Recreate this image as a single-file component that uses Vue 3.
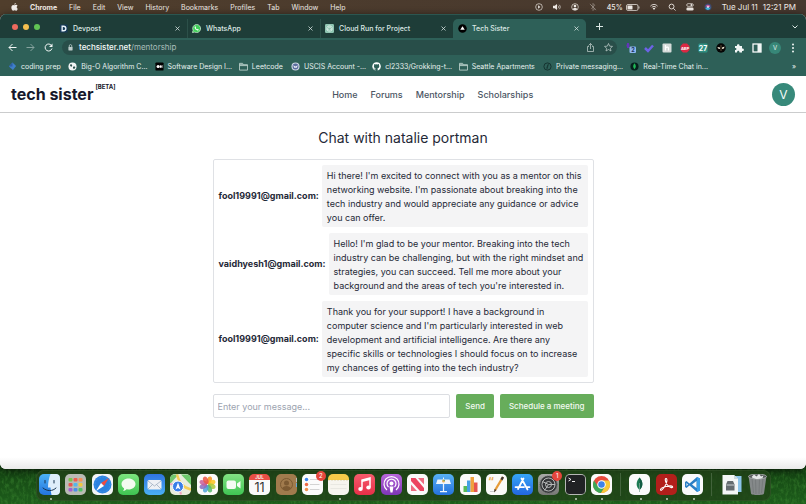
<script setup>
import { ref } from 'vue'

const menus = ['File', 'Edit', 'View', 'History', 'Bookmarks', 'Profiles', 'Tab', 'Window', 'Help']

const tabs = [
  { title: 'Devpost', icon: 'devpost' },
  { title: 'WhatsApp', icon: 'whatsapp' },
  { title: 'Cloud Run for Project', icon: 'cloud' },
  { title: 'Tech Sister', icon: 'sister', active: true }
]

const bookmarks = [
  { title: 'coding prep', art: '<path d="M10 1 18 9 11 18 2 10Z" fill="#3f7fca"/><path d="M10 1v9H2Z" fill="#2c5fa8"/>' },
  { title: 'Big-O Algorithm C...', art: '<circle cx="10" cy="10" r="9" fill="#f2f5f4"/><path d="M4 6c4-3 6 0 5 3s-4 1-5-3ZM11 11c3-2 6-1 5 2s-5 4-5-2Z" fill="#2c4f4b"/>' },
  { title: 'Software Design I...', art: '<rect x="1" y="1" width="18" height="18" rx="2" fill="#000"/><circle cx="7" cy="10" r="3.6" fill="#fff"/><ellipse cx="13" cy="10" rx="2" ry="3.4" fill="#fff"/><path d="M16.5 7v6" stroke="#fff"/>' },
  { title: 'Leetcode', folder: true },
  { title: 'USCIS Account -...', art: '<circle cx="10" cy="10" r="9" fill="#c9d2e2"/><circle cx="10" cy="10" r="6.4" fill="#596c9e"/><path d="m5 7 5 3 5-3-2 6h-6Z" fill="#e8ebf4"/>' },
  { title: 'cl2333/Grokking-t...', art: '<path fill="#fff" d="M10 .8a9.3 9.3 0 0 0-3 18.1c.5.1.7-.2.7-.5v-1.9c-2.600.6-3.100-1.100-3.100-1.100-.4-1.100-1-1.400-1-1.400-.9-.6 0-.6 0-.6 1 .1 1.500 1 1.500 1 .8 1.500 2.200 1.100 2.700.8.1-.6.300-1 .6-1.200-2.100-.2-4.200-1-4.200-4.600 0-1 .4-1.900 1-2.500-.1-.3-.5-1.200.1-2.500 0 0 .8-.3 2.600 1a8.600 8.600 0 0 1 4.600 0c1.800-1.300 2.600-1 2.600-1 .5 1.300.2 2.200.1 2.500.6.6 1 1.500 1 2.500 0 3.600-2.200 4.400-4.200 4.600.3.3.6.9.6 1.700v2.700c0 .3.2.6.7.5A9.300 9.300 0 0 0 10 .8Z"/>' },
  { title: 'Seattle Apartments', folder: true },
  { title: 'Private messaging...', art: '<circle cx="10" cy="10" r="8" fill="none" stroke="#14302d" stroke-width="2"/><path d="M12 4 9 16M8 14l3-8" stroke="#14302d" stroke-width="1.500"/>' },
  { title: 'Real-Time Chat in...', art: '<circle cx="10" cy="10" r="9" fill="#06201d"/><path d="M10 3c4 5 4 9 0 13-4-4-4-8 0-13Z" fill="#1fb656"/>' }
]

const links = ['Home', 'Forums', 'Mentorship', 'Scholarships']

const messages = [
  {
    from: 'fool19991@gmail.com',
    text: "Hi there! I'm excited to connect with you as a mentor on this networking website. I'm passionate about breaking into the tech industry and would appreciate any guidance or advice you can offer."
  },
  {
    from: 'vaidhyesh1@gmail.com',
    text: "Hello! I'm glad to be your mentor. Breaking into the tech industry can be challenging, but with the right mindset and strategies, you can succeed. Tell me more about your background and the areas of tech you're interested in."
  },
  {
    from: 'fool19991@gmail.com',
    text: "Thank you for your support! I have a background in computer science and I'm particularly interested in web development and artificial intelligence. Are there any specific skills or technologies I should focus on to increase my chances of getting into the tech industry?"
  }
]

const petals = ['#f7941d', '#f9c31f', '#a8c93a', '#55b96a', '#4fa3d9', '#8a6cc0', '#c95f9b', '#ec5548']
  .map((c, i) => `<ellipse cx="21" cy="12" rx="5" ry="8" fill="${c}" opacity=".85" transform="rotate(${i * 45 + 22} 21 21)"/>`)
  .join('')

const pads = ['#7bc24c', '#ef5c50', '#f4925a', '#e8554e', '#57b6e9', '#f2c83e', '#a25fd2', '#4c8fe6', '#51c264']
  .map((c, i) => `<rect x="${7 + (i % 3) * 10}" y="${8 + Math.floor(i / 3) * 10}" width="8" height="7" rx="2" fill="${c}"/>`)
  .join('')

const dock = [
  { name: 'Finder', running: true, bg: 'linear-gradient(#4cb2f8, #2474dd)', art: '<path d="M23 0h11a8 8 0 0 1 8 8v26a8 8 0 0 1-8 8h-9c-1-5-2-10-2-15h-5C18 17 20 8 23 0Z" fill="#dfeefb"/><path d="M12 13v5M30 13v5M8 28c8 7 19 7 26 0" fill="none" stroke="#16324f" stroke-width="2" stroke-linecap="round"/>' },
  { name: 'Launchpad', bg: '#b9bbb4', art: pads },
  { name: 'Safari', bg: '#f2f4f6', art: '<circle cx="21" cy="21" r="18" fill="#2b82e0"/><circle cx="21" cy="21" r="15" fill="none" stroke="#7fbcf5" stroke-dasharray="1 2"/><path d="m34 8-10 16-6-6Z" fill="#f04c41"/><path d="m8 34 10-16 6 6Z" fill="#fff"/>' },
  { name: 'Messages', bg: 'linear-gradient(#7ce57e, #3ec351)', art: '<path d="M21 9c8 0 14 5 14 11s-6 11-14 11l-4-.5c-2 2-4 3-7 3 2-2 2-3 2-5-3-2-5-5-5-8.500C7 14 13 9 21 9Z" fill="#f3fbf1"/>' },
  { name: 'Mail', bg: 'linear-gradient(#2f74e0, #4bb0f4)', art: '<rect x="7" y="12" width="28" height="19" rx="3" fill="#eef1f5"/><path d="m8 14 13 10 13-10M8 30l9-9M34 30l-9-9" fill="none" stroke="#98a9bc" stroke-width="1.500"/>' },
  { name: 'Maps', bg: '#e8ecdc', art: '<path d="M0 10a9 9 0 0 1 9-9h8L0 20Z" fill="#72c86e"/><path d="M22 1h11a9 9 0 0 1 9 9v12Z" fill="#6cc96b"/><path d="M14 1c5 18 12 26 28 30" fill="none" stroke="#f6cd55" stroke-width="5"/><path d="M0 20c9 0 20 8 22 21" fill="none" stroke="#eda5bd" stroke-width="4"/><circle cx="16" cy="25" r="11" fill="#3a7ee8" stroke="#fff" stroke-width="2"/><path d="m16 17 5 14-5-3-5 3Z" fill="#fff"/>' },
  { name: 'Photos', bg: '#fbfbf9', art: petals },
  { name: 'FaceTime', bg: 'linear-gradient(#83e383, #3fc453)', art: '<rect x="7" y="13" width="19" height="17" rx="4" fill="#f5fbf4"/><path d="m28 19 7-5v15l-7-5Z" fill="#f5fbf4"/>' },
  { name: 'Calendar', bg: 'linear-gradient(#e94f45 30%, #fafafa 30%)', art: '<text x="21" y="10" text-anchor="middle" font-size="9" font-weight="600" fill="#fff">JUL</text><text x="21" y="35" text-anchor="middle" font-size="25" fill="#333">11</text>' },
  { name: 'Contacts', bg: '#a17b4d', art: '<circle cx="21" cy="21" r="12" fill="none" stroke="#7c5a32" stroke-width="2"/><circle cx="21" cy="18" r="5" fill="#7c5a32"/><path d="M12 29c2-7 16-7 18 0-5 5-13 5-18 0Z" fill="#7c5a32"/><path d="M41 8v8" stroke="#b9b9b9" stroke-width="2"/><path d="M41 18v8" stroke="#65a8d8" stroke-width="2"/>' },
  { name: 'Reminders', badge: '2', bg: '#fbfbfb', art: '<circle cx="9" cy="11" r="3.500" fill="#3c86ee"/><circle cx="9" cy="21" r="3.500" fill="#ee6b47"/><circle cx="9" cy="31" r="3.500" fill="#f0914d"/><path d="M16 11h19M16 21h19M16 31h19" stroke="#c5c5c5" stroke-width="1.500"/>' },
  { name: 'Notes', running: true, bg: 'linear-gradient(#f6ca49 28%, #f7f5ef 28%)', art: '<path d="M0 12.500h42" stroke="#b69d55" stroke-dasharray="1 2"/><path d="M5 21h32M5 29h32" stroke="#dbdad4"/>' },
  { name: 'Music', bg: 'linear-gradient(#f65b6c, #e72f48)', art: '<path d="M16 29V12l16-4v18" fill="none" stroke="#fff" stroke-width="3"/><path d="M16 14 32 10" stroke="#fff" stroke-width="4"/><ellipse cx="13" cy="30" rx="4.500" ry="4" fill="#fff"/><ellipse cx="29" cy="27" rx="4.500" ry="4" fill="#fff"/>' },
  { name: 'Podcasts', bg: 'linear-gradient(#b867db, #7d36b5)', art: '<path d="M12 32a15 15 0 1 1 18 0M15 26a9 9 0 1 1 12 0" fill="none" stroke="#fff" stroke-width="2.500"/><circle cx="21" cy="19" r="4" fill="#fff"/><path d="M17 25h8l-2 12h-4Z" fill="#fff"/>' },
  { name: 'News', bg: '#fafafa', art: '<path d="M8 8h9l17 20v6h-8L8 14Z" fill="#ec4460"/><path d="M22 8h12v13ZM8 21v13h12Z" fill="#ef6b80"/>' },
  { name: 'Keynote', bg: 'linear-gradient(#58b1f4, #2572dd)', art: '<path d="M9 11h24l3 9H6Z" fill="#eef6fc"/><path d="M21 20v14M14 35h14" stroke="#eef6fc" stroke-width="2.500"/><path d="M21 7v5" stroke="#eef6fc" stroke-width="2"/><circle cx="21" cy="14" r="3" fill="#e7b056"/><path d="M21 14v-3a3 3 0 0 1 3 3Z" fill="#57a95b"/>' },
  { name: 'Numbers', bg: '#fbfbfa', art: '<path d="M7 36V24h7v12Z" fill="#57bb59"/><path d="M14 36V13h7v23Z" fill="#45a1e4"/><path d="M21 36V6h7v30Z" fill="#f0a23d"/><path d="M28 36V17h7v19Z" fill="#e55450"/>' },
  { name: 'Pages', bg: '#fafaf7', art: '<text x="4" y="22" font-size="22" font-weight="700" fill="#edaa53">“</text><path d="m32 5 4 2-15 25-4 4 0-6Z" fill="#e79c37"/><path d="m32 5 4 2-3 6-4-3Z" fill="#3b3531"/><path d="m17 30 4 2-5 5Z" fill="#3b3531"/><path d="M8 35h8" stroke="#bbb" stroke-width="1.500"/>' },
  { name: 'App Store', bg: 'linear-gradient(#36a5f6, #2366df)', art: '<path d="M23 9 12 30M19 9l12 22M7 26h17M29 26h6" fill="none" stroke="#fff" stroke-width="3.500" stroke-linecap="round"/>' },
  { name: 'System Settings', badge: '1', bg: 'linear-gradient(#a9aaa8, #777875)', art: '<circle cx="21" cy="21" r="17" fill="#353739"/><circle cx="21" cy="21" r="13" fill="none" stroke="#b8baba" stroke-width="2"/><circle cx="21" cy="21" r="6" fill="none" stroke="#b8baba" stroke-width="2"/><path d="M21 21 9 15M21 21h13M21 21l-8 12" stroke="#b8baba" stroke-width="2"/><circle cx="21" cy="21" r="17" fill="none" stroke="#55585a" stroke-width="2" stroke-dasharray="2 2"/>' },
  { name: 'Terminal', running: true, bg: '#b5b7b5', art: '<rect x="2" y="2" width="38" height="38" rx="7" fill="#202224"/><path d="m7 8 5 3-5 3M14 15h6" fill="none" stroke="#f1f1f1" stroke-width="2"/>' },
  { name: 'Chrome', running: true, bg: '#fafafa', art: '<circle cx="21" cy="21" r="17" fill="#e94b3d"/><path d="M6 13A17 17 0 0 0 20 38l8-13-14 0Z" fill="#3da857"/><path d="M20 38A17 17 0 0 0 36 13H21l7 12Z" fill="#f7c938"/><circle cx="21" cy="21" r="8.500" fill="#fff"/><circle cx="21" cy="21" r="6.500" fill="#3e82ea"/>' },
  { divider: true, name: 'apps' },
  { name: 'MongoDB Compass', running: true, bg: '#fbfbfb', art: '<path d="M21 7c8 9 7 18 1 24h-2c-6-6-7-15 1-24Z" fill="#1d7b53"/><path d="M21 7c8 9 7 18 1 24Z" fill="#135c44"/><path d="M21 18v18" stroke="#7fa897" stroke-width="1.500"/>' },
  { name: 'Acrobat', running: true, bg: '#b21f1b', art: '<path d="M20 9c4 0 1 12-4 18-4 6-7 7-7 4 1-5 21-9 24-6 2 3-5 4-10-3-4-5-6-13-3-13Z" fill="none" stroke="#fff" stroke-width="2.200"/>' },
  { name: 'Visual Studio Code', running: true, bg: '#f9fafb', art: '<path d="m30 6 6 3v24l-6 3-15-13-6 5-3-2v-10l3-2 6 5Z" fill="#2b7fc5"/><path d="M29 14v14l-9-7ZM9 18v6l3-3Z" fill="#f9fafb"/><path d="m30 6 6 3v24l-6 3Z" fill="#3aa0e8"/>' },
  { divider: true, name: 'files' },
  { name: 'Downloads', bg: 'transparent', art: '<path d="M18 4h23v32H18Z" fill="#8cc4ea"/><path d="M3 2h23l8 8v31H3Z" fill="#f4f6f7"/><path d="M26 2v8h8Z" fill="#cdd8de"/><path d="m10 21 3-7h11l3 7v12H10Z" fill="#646b70"/><path d="M11 22h15" stroke="#c8ced1" stroke-width="2"/>' },
  { name: 'Trash', bg: 'transparent', art: '<path d="m3 4 5 35c0 4 26 4 26 0l5-35Z" fill="#85898a"/><path d="m10 8 3 30M17 9l1 31M25 9l-1 31M32 8l-3 30" stroke="#717677" stroke-width="1.500"/><ellipse cx="21" cy="5" rx="18" ry="5" fill="#55595a" stroke="#b4b8b8" stroke-width="1.500"/><path d="m9 6 5-5 5 4 5-5 4 5 5-2-2 5c-6 3-16 3-22-2Z" fill="#e6e8e8"/>' }
]

const draft = ref('')
const address = ref('techsister.net/mentorship')

function send() {
  draft.value = ''
}
</script>

<template>
  <div class="desktop">
    <svg class="grass" aria-hidden="true">
      <filter id="blades" x="0" y="0" width="100%" height="100%" color-interpolation-filters="sRGB">
        <feTurbulence type="fractalNoise" baseFrequency=".35 .2" numOctaves="3" seed="4" />
        <feColorMatrix values="0 0 0 0 .3  0 0 0 0 .62  0 0 0 0 .24  1.800 0 0 0 -.75" />
      </filter>
      <rect width="100%" height="100%" filter="url(#blades)" />
    </svg>

    <header class="menubar">
      <nav class="menus" aria-label="Menu bar">
        <button class="apple" aria-label="Apple">
          <svg viewBox="0 0 16 18"><path fill="#f4f0ec" d="M11 0c.2 2-1.600 4-3.500 4C7.300 2 9 .3 11 0ZM8 5c1 0 2-.9 3.700-.9 1.300 0 2.500.7 3.300 1.800-3 1.800-2.300 5.700.5 6.900-.9 2.400-2.400 4.700-4 4.700-1.300 0-1.700-.8-3.200-.8s-2 .8-3.200.8C2.900 17.500.8 13.600.8 10c0-3.700 2.200-5.700 4.200-5.700C6.300 4.300 7.300 5 8 5Z" /></svg>
        </button>
        <button class="app-name">Chrome</button>
        <button v-for="m in menus" :key="m">{{ m }}</button>
      </nav>
      <div class="status">
        <svg viewBox="0 0 18 18"><circle cx="9" cy="9" r="7.500" class="line" /><path d="m7 5 5 4-5 4Z" class="solid" /></svg>
        <svg viewBox="0 0 18 18"><path d="M0 6h4l5-4v14l-5-4H0Z" class="solid" /><path d="M11 6c2 2 2 4 0 6M14 4c3 3 3 7 0 10" class="line" /></svg>
        <svg viewBox="0 0 18 18"><circle cx="9" cy="9" r="7.500" class="line" /><circle cx="9" cy="7" r="3" class="solid" /><path d="M3.500 14c2-4 9-4 11 0-3 3-8 3-11 0Z" class="solid" /></svg>
        <svg viewBox="0 0 18 18" class="dim"><path d="m5 5 8 8-4 4V1l4 4-8 8M2 2l14 14" class="line" /></svg>
        <span class="power">45%
          <svg viewBox="0 0 28 14" class="battery"><rect x="1" y="1" width="23" height="12" rx="3" class="line" /><rect x="3" y="3" width="10" height="8" rx="1" class="solid" /><path d="M26 5v4" class="line" /></svg>
        </span>
        <svg viewBox="0 0 18 18"><path d="M1 7c5-5 11-5 16 0M4 10c3-3 7-3 10 0" class="line thick" /><path d="m6 12 3 4 3-4c-2-1.500-4-1.500-6 0Z" class="solid" /></svg>
        <svg viewBox="0 0 18 18"><circle cx="8" cy="8" r="5.500" class="line thick" /><path d="m12 12 5 5" class="line thick" /></svg>
        <svg viewBox="0 0 18 18"><rect x="1.500" y="1.500" width="15" height="6" rx="3" class="line" /><circle cx="12" cy="4.500" r="2" class="solid" /><rect x="1" y="10" width="16" height="7" rx="3" class="solid" /></svg>
        <svg viewBox="0 0 18 18"><circle cx="9" cy="9" r="8" fill="#3c4a6d" /><path d="M3 8c5-8 12-2 11 0-2 4-7 0-11 0Z" fill="#d05aa0" /><path d="M3 11c5-4 9 3 12-2-1 8-9 9-12 2Z" fill="#42b6d8" /><circle cx="9" cy="9" r="2" fill="#f4f8fc" /></svg>
        <time class="clock"><span>Tue Jul 11</span><span>12:21 PM</span></time>
      </div>
    </header>

    <section class="window">
      <div class="tabstrip">
        <div class="lights"><i class="close" /><i class="min" /><i class="max" /></div>
        <div v-for="t in tabs" :key="t.title" class="tab" :class="{ active: t.active }">
          <svg viewBox="0 0 20 20" class="favicon">
            <template v-if="t.icon === 'devpost'">
              <rect x="2" y="1" width="17" height="18" rx="2" fill="#173a58" />
              <path d="M7 5h3c7 0 7 10 0 10H7Z" fill="none" stroke="#eaf4fb" stroke-width="3" />
            </template>
            <template v-else-if="t.icon === 'whatsapp'">
              <path d="M10 1a9 9 0 1 1-4 17l-5 1 1.500-5A9 9 0 0 1 10 1Z" fill="#3fcf58" stroke="#e4f6e7" stroke-width="1.500" />
              <path d="M6 6c1-1 2-1 2 0l1 2-1 1c1 2 2 2 3 3l1-1 3 1c0 2-2 3-4 2-3-1-6-5-5-8Z" fill="#fff" />
            </template>
            <template v-else-if="t.icon === 'cloud'">
              <rect width="20" height="20" rx="3" fill="#8fc5b2" />
              <path d="M10 3 16 6.500v7L10 17l-6-3.500v-7ZM7 5l7 4v6M13 5 6 9v6M4 11l6 3 6-4" fill="none" stroke="#d9eee6" stroke-width="1.500" />
            </template>
            <template v-else>
              <circle cx="10" cy="10" r="9.500" fill="#000" />
              <path d="m10 5 5 8H5Z" fill="#fff" />
            </template>
          </svg>
          <span class="tab-title">{{ t.title }}</span>
          <button class="tab-close" :aria-label="'Close ' + t.title">
            <svg viewBox="0 0 10 10"><path d="m1 1 8 8M9 1 1 9" class="line" /></svg>
          </button>
        </div>
        <button class="new-tab" aria-label="New tab">
          <svg viewBox="0 0 14 14"><path d="M7 0v14M0 7h14" class="line thick" /></svg>
        </button>
        <button class="tab-search" aria-label="Search tabs">
          <svg viewBox="0 0 12 12"><path d="m1 3 5 5 5-5" class="line thick" /></svg>
        </button>
      </div>

      <div class="toolbar">
        <button aria-label="Back"><svg viewBox="0 0 18 18"><path d="M17 9H2M9 2 2 9l7 7" class="line thick" /></svg></button>
        <button aria-label="Forward" class="faded"><svg viewBox="0 0 18 18"><path d="M1 9h15M9 2l7 7-7 7" class="line thick" /></svg></button>
        <button aria-label="Reload"><svg viewBox="0 0 18 18"><path d="M15 5a7 7 0 1 0 1 6" class="line thick" /><path d="M17 1v7h-7Z" class="solid" /></svg></button>
        <div class="omnibox">
          <svg viewBox="0 0 12 16" class="lock"><path d="M3 7V4c0-4 6-4 6 0v3" class="line thick" /><rect x="1" y="7" width="10" height="8" rx="1" class="solid" /></svg>
          <label class="address">
            <span class="address-text" aria-hidden="true"><b>techsister.net</b>/mentorship</span>
            <input v-model="address" aria-label="Address" />
          </label>
          <button aria-label="Share"><svg viewBox="0 0 18 18"><path d="M6 7H3v10h12V7h-3M9 12V1M5 5l4-4 4 4" class="line" /></svg></button>
          <button aria-label="Bookmark"><svg viewBox="0 0 18 18"><path d="m9 1 2.300 5.300 5.700.5-4.300 3.800L14 16l-5-3-5 3 1.300-5.400L1 6.800l5.700-.5Z" class="line" /></svg></button>
        </div>
        <div class="extensions">
          <button aria-label="Extension 2"><svg viewBox="0 0 20 20"><path d="M4 0v10M1 5h6" stroke="#6236b8" stroke-width="4" /><rect x="7" y="7" width="13" height="13" rx="2" fill="#8fb7f2" /><text x="14" y="18" text-anchor="middle" font-size="11" font-weight="700" fill="#17335c">2</text></svg></button>
          <button aria-label="Tasks"><svg viewBox="0 0 20 20"><path d="m2 10 6 6L18 5" fill="none" stroke="#6c63e6" stroke-width="5" /></svg></button>
          <button aria-label="Honey"><svg viewBox="0 0 20 20"><rect x="1" y="1" width="18" height="18" rx="2" fill="#d5dbd9" /><path d="M7 4v11M7 10c4-4 6-1 6 1v4" fill="none" stroke="#fff" stroke-width="2.500" /></svg></button>
          <button aria-label="Adblock Plus"><svg viewBox="0 0 20 20"><path d="M6 1h8l5 5v8l-5 5H6l-5-5V6Z" fill="#dc2843" /><text x="10" y="13" text-anchor="middle" font-size="8" font-weight="700" fill="#fff">ABP</text></svg></button>
          <button aria-label="Calendar"><svg viewBox="0 0 20 20"><rect x="1" y="1" width="18" height="18" rx="2" fill="#2f9183" /><text x="10" y="15" text-anchor="middle" font-size="14" font-weight="700" fill="#fff">27</text></svg></button>
          <button aria-label="Focus"><svg viewBox="0 0 20 20"><circle cx="10" cy="10" r="9.500" fill="#050505" /><path d="m3 8 5 1v3l-4-1ZM17 7l-5 2v3l4-1Z" fill="#f0e7d2" /><path d="M10 4v12" stroke="#604d37" stroke-width="2" /></svg></button>
          <button aria-label="Extensions"><svg viewBox="0 0 20 20"><path d="M2 6h4c-1-5 6-5 5 0h5v5c5-1 5 6 0 5v3h-5c0-5-5-5-5 0H2v-5c4 0 4-4 0-4Z" class="solid" /></svg></button>
          <button aria-label="Side panel"><svg viewBox="0 0 20 20"><rect x="2" y="2" width="16" height="16" fill="none" stroke="#fff" stroke-width="2.500" /><path d="M11 2h7v16h-7Z" class="solid" /></svg></button>
          <button class="profile" aria-label="Profile">V</button>
          <button aria-label="More"><svg viewBox="0 0 20 20"><circle cx="10" cy="3" r="2" class="solid" /><circle cx="10" cy="10" r="2" class="solid" /><circle cx="10" cy="17" r="2" class="solid" /></svg></button>
        </div>
      </div>

      <nav class="bookmarks" aria-label="Bookmarks">
        <a v-for="b in bookmarks" :key="b.title" href="#">
          <svg v-if="b.folder" viewBox="0 0 20 20"><path d="M1 3h7l2 3h9v12H1ZM1 8h18M1 6h9" fill="none" stroke="#b9cfca" stroke-width="2" /></svg>
          <svg v-else viewBox="0 0 20 20" v-html="b.art" />
          <span>{{ b.title }}</span>
        </a>
        <button aria-label="More bookmarks">»</button>
      </nav>

      <main class="page">
        <header class="site-header">
          <a href="#" class="logo">tech sister<sup>[BETA]</sup></a>
          <nav class="site-nav" aria-label="Site">
            <a v-for="l in links" :key="l" href="#">{{ l }}</a>
          </nav>
          <button class="avatar" aria-label="Account">V</button>
        </header>

        <div class="chat">
          <h1>Chat with natalie portman</h1>
          <ul class="messages">
            <li v-for="(m, i) in messages" :key="i">
              <strong>{{ m.from }}:</strong>
              <p>{{ m.text }}</p>
            </li>
          </ul>
          <form class="composer" @submit.prevent="send">
            <input v-model="draft" aria-label="Message" placeholder="Enter your message..." />
            <button type="submit">Send</button>
            <button type="button">Schedule a meeting</button>
          </form>
        </div>
      </main>
    </section>

    <nav class="dock" aria-label="Dock">
      <template v-for="d in dock" :key="d.name">
        <i v-if="d.divider" class="divider" />
        <button v-else :aria-label="d.name" :class="{ running: d.running }" :style="{ background: d.bg }">
          <svg viewBox="0 0 42 42" v-html="d.art" />
          <span v-if="d.badge" class="badge">{{ d.badge }}</span>
        </button>
      </template>
    </nav>
  </div>
</template>

<style>
body {
  background: #18421a;
}
</style>

<style scoped>
* {
  box-sizing: border-box;
}

.desktop {
  position: relative;
  display: flex;
  flex-direction: column;
  min-height: 100vh;
  overflow: hidden;
  font-family: Inter, "Liberation Sans", sans-serif;
  background: linear-gradient(#4b3c2d 0, #4b3c2d 30px, #123d10 90%, #1d5d1b);
}

.grass {
  position: absolute;
  left: 0;
  bottom: 0;
  width: 100%;
  height: 40px;
  opacity: 0.5;
}

button {
  padding: 0;
  border: 0;
  background: none;
  color: inherit;
  font: inherit;
}

a {
  color: inherit;
  text-decoration: none;
}

svg {
  display: block;
  flex: none;
}

.line {
  fill: none;
  stroke: currentColor;
  stroke-width: 1.5;
}

.thick {
  stroke-width: 2;
}

.solid {
  fill: currentColor;
}

.menubar {
  display: flex;
  justify-content: space-between;
  align-items: center;
  height: 14px;
  padding: 0 10px 0 11px;
  font-size: 7px;
  font-weight: 500;
  color: #f0ebe6;
  background: linear-gradient(90deg, #503e2c, #46382f);
}

.menus,
.status {
  display: flex;
  align-items: center;
}

.menus {
  gap: 12px;
  font-weight: 400;
}

.app-name {
  font-weight: 700;
}

.apple svg {
  width: 7px;
  height: 8px;
}

.status {
  gap: 10px;
}

.status svg {
  width: 8px;
  height: 8px;
}

.status .dim {
  opacity: 0.5;
}

.power {
  display: flex;
  align-items: center;
  gap: 3px;
}

.status .battery {
  width: 14px;
  height: 7px;
}

.clock {
  display: flex;
  gap: 5px;
  font-size: 8px;
  font-weight: 400;
}

.window {
  position: relative;
  display: flex;
  flex: 1;
  flex-direction: column;
  overflow: hidden;
  border-radius: 6px;
  background: #fff;
  box-shadow: 0 2px 9px rgba(0, 0, 0, 0.7);
}

.tabstrip {
  display: flex;
  align-items: flex-end;
  height: 24px;
  padding-right: 8px;
  font-size: 7px;
  font-weight: 500;
  color: #dce8e5;
  background: #1e3d38;
  border-top: 1px solid #2c5650;
}

.lights {
  display: flex;
  gap: 5px;
  align-self: center;
  width: 54px;
  padding-left: 12px;
}

.lights i {
  width: 6px;
  height: 6px;
  border-radius: 50%;
}

.close {
  background: #ed6a5e;
}

.min {
  background: #f5bf4f;
}

.max {
  background: #61c554;
}

.tab {
  display: flex;
  flex: 0 1 133px;
  align-items: center;
  height: 19px;
  padding: 0 7px 0 5px;
}

.tab + .tab {
  box-shadow: inset 1px 0 #2c5049;
}

.tab.active {
  border-radius: 5px 5px 0 0;
  background: #2e6058;
  box-shadow: none;
}

.favicon {
  width: 9px;
  height: 9px;
}

.tab-title {
  flex: 1;
  padding-left: 5px;
  white-space: nowrap;
}

.tab-close svg {
  width: 5px;
  height: 5px;
}

.new-tab {
  align-self: center;
  padding-left: 10px;
}

.new-tab svg {
  width: 7px;
  height: 7px;
}

.tab-search {
  align-self: center;
  margin-left: auto;
}

.tab-search svg {
  width: 6px;
  height: 6px;
}

.toolbar {
  display: flex;
  align-items: center;
  gap: 9px;
  height: 19px;
  padding: 0 8px;
  color: #f1f6f5;
  background: #2e6058;
}

.toolbar svg {
  width: 9px;
  height: 9px;
}

.faded {
  opacity: 0.45;
}

.omnibox {
  display: flex;
  flex: 1;
  align-items: center;
  gap: 6px;
  height: 15px;
  padding: 0 4px 0 6px;
  border-radius: 8px;
  color: #bdccca;
  background: #284e49;
}

.omnibox button {
  padding-left: 3px;
}

.toolbar .lock {
  width: 5px;
  height: 7px;
}

.address {
  position: relative;
  flex: 1;
  font-size: 8px;
  line-height: 15px;
}

.address-text {
  color: #a9bebb;
}

.address-text b {
  font-weight: 500;
  color: #f6faf9;
}

.address input {
  position: absolute;
  inset: 0;
  width: 100%;
  padding: 0;
  border: 0;
  outline: 0;
  font: inherit;
  color: transparent;
  background: transparent;
}

.extensions {
  display: flex;
  align-items: center;
  gap: 8px;
}

.extensions svg {
  width: 10px;
  height: 10px;
}

.profile {
  width: 12px;
  height: 12px;
  margin: 0 -1px;
  border-radius: 50%;
  font-size: 6px;
  line-height: 12px;
  color: #e2f1ed;
  background: #378778;
}

.bookmarks {
  display: grid;
  grid-template-columns: 60fr 86fr 84fr 52fr 81fr 86fr 84fr 87fr 161fr auto;
  align-items: center;
  height: 19px;
  padding: 0 10px 0 8px;
  font-size: 7px;
  font-weight: 400;
  color: #e6f0ee;
  background: #2e6058;
}

.bookmarks a {
  display: flex;
  align-items: center;
  gap: 4px;
  min-width: 0;
  white-space: nowrap;
}

.bookmarks svg {
  width: 9px;
  height: 9px;
}

.page {
  flex: 1;
  color: #1f2937;
  background: linear-gradient(#fff 97%, #e9e9e9);
}

.site-header {
  display: flex;
  justify-content: space-between;
  align-items: center;
  height: 37px;
  padding: 0 11px;
  border-bottom: 1px solid #cbcccd;
}

.logo {
  position: relative;
  font-size: 16px;
  font-weight: 700;
  white-space: nowrap;
  color: #16182b;
}

.logo sup {
  position: absolute;
  top: 0;
  left: 100%;
  padding-left: 2px;
  font-size: 6px;
  line-height: 6px;
}

.site-nav {
  display: flex;
  gap: 13px;
  font-size: 9px;
  font-weight: 500;
  color: #4b5563;
}

.avatar {
  width: 23px;
  height: 23px;
  border-radius: 50%;
  font-size: 12px;
  color: #f2faf8;
  background: #37897a;
}

.chat {
  width: 100%;
  max-width: 381px;
  margin: 0 auto;
  padding-top: 16px;
}

h1 {
  margin: 0 0 12px;
  font-size: 14px;
  font-weight: 400;
  line-height: 18px;
  text-align: center;
}

.messages {
  display: flex;
  flex-direction: column;
  gap: 6px;
  margin: 0 0 11px;
  padding: 5px;
  border: 1px solid #dfe1e5;
  border-radius: 2px;
  list-style: none;
  font-size: 9px;
  line-height: 14px;
}

.messages li {
  display: flex;
  align-items: center;
  gap: 3px;
}

.messages strong {
  font-weight: 700;
}

.messages p {
  flex: 1;
  margin: 0;
  padding: 4px 4px 2px 5px;
  border-radius: 2px;
  background: #f4f4f5;
}

.composer {
  display: flex;
  gap: 6px;
  height: 24px;
}

.composer input {
  flex: 1;
  min-width: 0;
  padding: 0 4px;
  border: 1px solid #dcdee2;
  border-radius: 2px;
  font: inherit;
  font-size: 9px;
  color: #1f2937;
  background: #fff;
}

.composer input::placeholder {
  color: #9ca3af;
}

.composer button {
  padding: 0 9px;
  border-radius: 2px;
  font-size: 8px;
  font-weight: 500;
  color: #f3faf2;
  background: #67ad5b;
}

.dock {
  position: relative;
  display: flex;
  justify-content: space-between;
  align-items: center;
  height: 31px;
  margin: 1px 35px 3px 36px;
  padding: 0 3px 3px;
  border-radius: 8px;
  background: rgba(32, 66, 24, 0.8);
  box-shadow: inset 0 0 0 1px rgba(120, 150, 110, 0.15);
}

.dock button {
  position: relative;
  width: 21px;
  height: 21px;
  border-radius: 5px;
}

.dock button svg {
  width: 21px;
  height: 21px;
}

.running::after {
  content: "";
  position: absolute;
  bottom: -5px;
  left: 50%;
  width: 2px;
  height: 2px;
  border-radius: 50%;
  background: #c5d2bf;
}

.badge {
  position: absolute;
  top: -3px;
  right: -3px;
  width: 10px;
  height: 10px;
  border-radius: 50%;
  font-size: 6px;
  line-height: 10px;
  color: #fff;
  background: #e4463c;
}

.divider {
  width: 7px;
  height: 23px;
  background: linear-gradient(90deg, transparent 3px, #42633b 3px, #42633b 4px, transparent 4px);
}
</style>
